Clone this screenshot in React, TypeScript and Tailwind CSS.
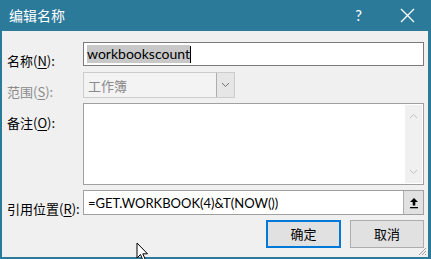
import React from "react";

const cjk = { fontFamily: '"Microsoft YaHei", "Noto Sans CJK SC", "Noto Sans", sans-serif' };
const latin = { fontFamily: 'Lato, "Noto Sans", "Noto Sans CJK SC", sans-serif' };

const Chevron = ({ up = false, color = "#606060" }: { up?: boolean; color?: string }) => (
  <svg width="9" height="6" viewBox="0 0 9 6">
    <path
      d={up ? "M1 5 L4.5 1.5 L8 5" : "M1 1 L4.5 4.5 L8 1"}
      fill="none"
      stroke={color}
      strokeWidth="1"
    />
  </svg>
);

const Label = ({ text, k, disabled = false }: { text: string; k: string; disabled?: boolean }) => (
  <span className={`text-[13px] leading-none ${disabled ? "text-[#8a8a8a]" : "text-black"}`} style={cjk}>
    {text}(<span className="underline underline-offset-2">{k}</span>):
  </span>
);

export default function App() {
  return (
    <div className="relative w-[431px] h-[259px] bg-[#2b7a9a] flex flex-col overflow-hidden">
      {/* title bar */}
      <div className="h-[31px] flex items-center pl-[9px] text-white">
        <span className="text-[14px]" style={cjk}>编辑名称</span>
        <span className="ml-auto mr-[38px] text-[15px]" style={latin}>?</span>
        <svg width="15" height="15" viewBox="0 0 15 15" className="mr-[16px]">
          <path d="M1 1 L14 14 M14 1 L1 14" stroke="white" strokeWidth="1.3" />
        </svg>
      </div>

      {/* body */}
      <div className="flex-1 ml-[2px] mr-[3px] mb-[2px] bg-[#f0f0f0] pr-[4px] pt-[11px] flex flex-col">
        {/* name */}
        <div className="flex h-[24px]">
          <div className="w-[81px] pl-[5px] pt-[6px]">
            <Label text="名称" k="N" />
          </div>
          <div className="flex-1 border border-[#7a7a7a] bg-white flex items-center pl-[3px]">
            <span className="bg-[#c8c8c8] text-[14px] leading-[18px] text-black" style={latin}>workbookscount</span>
            <span className="w-px h-[17px] bg-black" />
          </div>
        </div>

        {/* scope */}
        <div className="flex h-[26px] mt-[6px]">
          <div className="w-[81px] pl-[5px] pt-[7px]">
            <Label text="范围" k="S" disabled />
          </div>
          <div className="w-[152px] border border-[#cccccc] bg-[#f3f3f3] flex items-stretch">
            <span className="flex-1 pl-[4px] pt-[3px] text-[13px] text-[#8a8a8a]" style={cjk}>工作簿</span>
            <span className="w-[18px] bg-[#e6e6e6] border-l border-[#adadad] flex items-center justify-center">
              <Chevron color="#707070" />
            </span>
          </div>
        </div>

        {/* comment */}
        <div className="flex h-[82px] mt-[5px]">
          <div className="w-[81px] pl-[5px] pt-[7px]">
            <Label text="备注" k="O" />
          </div>
          <div className="flex-1 border border-[#a0a0a0] bg-white flex justify-end p-px">
            <div className="w-[17px] bg-[#f0f0f0] flex flex-col items-center justify-between py-[8px]">
              <Chevron up color="#c0c0c0" />
              <Chevron color="#c0c0c0" />
            </div>
          </div>
        </div>

        {/* refers to */}
        <div className="flex h-[25px] mt-[5px]">
          <div className="w-[81px] pl-[5px] pt-[6px]">
            <Label text="引用位置" k="R" />
          </div>
          <div className="flex-1 border border-[#a0a0a0] bg-white flex items-stretch">
            <span className="flex-1 pl-[4px] pt-[3px] text-[13px] text-black" style={latin}>
              =GET.WORKBOOK(4)&amp;T(NOW())
            </span>
            <span className="w-[20px] bg-[#e1e1e1] border-l border-[#adadad] flex items-center justify-center">
              <svg width="10" height="12" viewBox="0 0 10 12">
                <path d="M5 1 L9 5 L6.3 5 L6.3 8.5 L3.7 8.5 L3.7 5 L1 5 Z" fill="black" />
                <rect x="1" y="10" width="8" height="1.3" fill="black" />
              </svg>
            </span>
          </div>
        </div>

        {/* buttons */}
        <div className="flex justify-end gap-[9px] mt-[5px]">
          <button
            className="w-[75px] h-[28px] bg-[#e1e1e1] border-2 border-[#0078d7] text-[13px] text-black"
            style={cjk}
          >
            确定
          </button>
          <button
            className="w-[74px] h-[28px] bg-[#e1e1e1] border border-[#adadad] text-[13px] text-black"
            style={cjk}
          >
            取消
          </button>
        </div>
      </div>

      {/* size grip */}
      <svg width="10" height="10" viewBox="0 0 10 10" className="absolute right-[4px] bottom-[3px]">
        <path d="M9 2 L2 9 M9 5 L5 9 M9 8 L8 9" stroke="#a0a0a0" strokeWidth="1" />
      </svg>

      {/* mouse cursor */}
      <svg width="14" height="20" viewBox="0 0 14 20" className="absolute left-[136px] top-[242px]">
        <path d="M1 1 L1 16 L4.5 12.5 L7 18.5 L9.3 17.5 L6.8 11.8 L11.5 11.8 Z" fill="white" stroke="black" strokeWidth="1" />
      </svg>
    </div>
  );
}
